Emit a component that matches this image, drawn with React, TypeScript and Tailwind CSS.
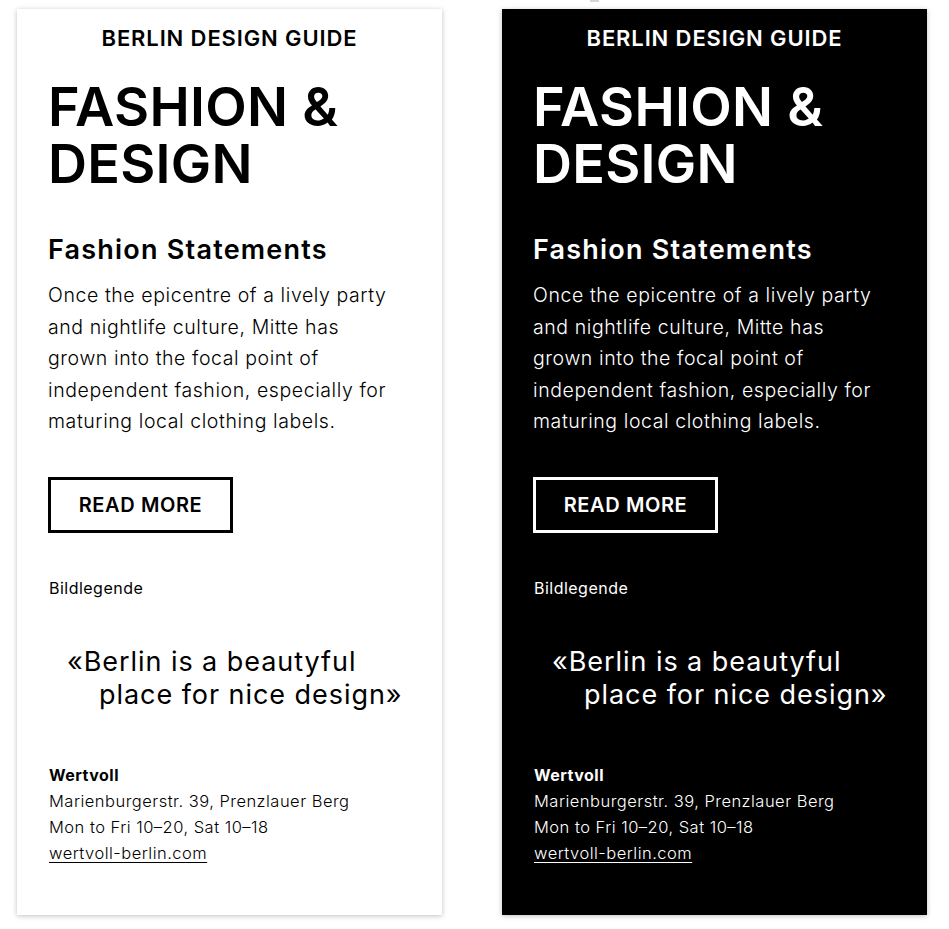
import React from 'react'

const font = { fontFamily: '"Inter", "Roboto", sans-serif' }

function GuideCard({ dark }: { dark?: boolean }) {
  const fg = dark ? 'text-white' : 'text-black'
  const border = dark ? 'border-white' : 'border-black'
  return (
    <div
      className={`w-[425px] h-[906px] flex flex-col shadow-[0_1px_5px_rgba(0,0,0,0.25)] ${dark ? 'bg-black' : 'bg-white'} ${fg}`}
    >
      <div className="pt-[15px] text-center text-[22px] leading-[28px] font-semibold tracking-[0.04em]">
        BERLIN DESIGN GUIDE
      </div>

      <div className="px-[31px]">
        <h1 className="mt-[26px] text-[54px] leading-[57px] font-semibold tracking-[0.005em]">
          <span className="block">FASHION &amp;</span>
          <span className="block">DESIGN</span>
        </h1>

        <h2 className="mt-[42px] text-[27px] leading-[32px] font-semibold tracking-[0.045em]">
          Fashion Statements
        </h2>

        <p className="mt-[14px] w-[352px] text-[19.5px] leading-[31.5px] font-light tracking-[0.03em]">
          Once the epicentre of a lively party and nightlife culture, Mitte has grown into the focal point of
          independent fashion, especially for maturing local clothing labels.
        </p>

        <div
          className={`mt-[39px] w-[185px] h-[56px] border-[3px] ${border} flex items-center justify-center text-[20px] font-semibold tracking-[0.03em]`}
        >
          READ MORE
        </div>

        <div className="mt-[43px] pl-[1px] text-[16px] leading-[24px] tracking-[0.03em]">Bildlegende</div>

        <blockquote className="mt-[45px] pl-[51px] -indent-[32px] text-[27px] leading-[33px] tracking-[0.035em]">
          «Berlin is a beautyful place for nice design»
        </blockquote>

        <div className="mt-[51px] pl-[1px] text-[16px] leading-[26px] tracking-[0.03em]">
          <div className="font-bold">Wertvoll</div>
          <div className="font-light text-[16.5px]">Marienburgerstr. 39, Prenzlauer Berg</div>
          <div className="font-light text-[16.5px]">Mon to Fri 10–20, Sat 10–18</div>
          <a href="#" className="font-light text-[16.5px] underline underline-offset-[3px]">
            wertvoll-berlin.com
          </a>
        </div>
      </div>
    </div>
  )
}

export default function App() {
  return (
    <div className="relative min-h-[929px] w-[949px] bg-white" style={font}>
      <div className="absolute left-[590px] top-0 w-[9px] h-[2px] bg-gray-300" />
      <div className="flex gap-[60px] pt-[9px] pl-[17px]">
        <GuideCard />
        <GuideCard dark />
      </div>
    </div>
  )
}
